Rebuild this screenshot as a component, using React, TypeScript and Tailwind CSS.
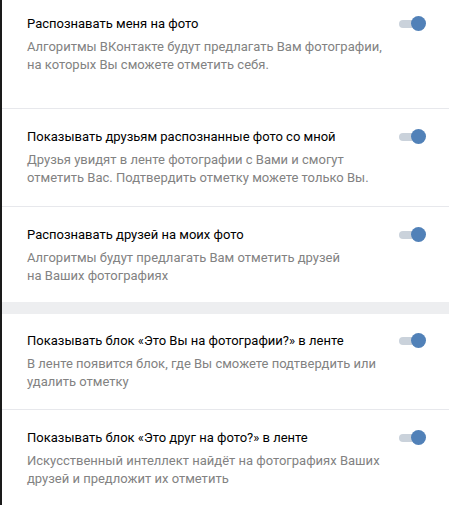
import React from "react";

type Item = { title: string; lines: string[] };

const Toggle = () => (
  <div className="relative w-[30px] h-[16px] shrink-0 mt-[1px]">
    <div className="absolute left-[2px] top-[4px] w-[24px] h-[8px] rounded-full bg-[#cad2db]" />
    <div className="absolute right-[1px] top-0 w-[15px] h-[15px] rounded-full bg-[#5181b8]" />
  </div>
);

const Row = ({ item, pt, pb }: { item: Item; pt: string; pb: string }) => (
  <div className={`flex justify-between pl-[25px] pr-[22px] ${pt} ${pb}`}>
    <div>
      <div className="text-[13px] leading-[18px] text-black">{item.title}</div>
      <div className="mt-[5px] text-[13px] leading-[18px] text-[#828282]">
        {item.lines.map((l, i) => (
          <div key={i}>{l}</div>
        ))}
      </div>
    </div>
    <Toggle />
  </div>
);

export default function App() {
  const g1: Item[] = [
    {
      title: "Распознавать меня на фото",
      lines: [
        "Алгоритмы ВКонтакте будут предлагать Вам фотографии,",
        "на которых Вы сможете отметить себя.",
      ],
    },
    {
      title: "Показывать друзьям распознанные фото со мной",
      lines: [
        "Друзья увидят в ленте фотографии с Вами и смогут",
        "отметить Вас. Подтвердить отметку можете только Вы.",
      ],
    },
    {
      title: "Распознавать друзей на моих фото",
      lines: [
        "Алгоритмы будут предлагать Вам отметить друзей",
        "на Ваших фотографиях",
      ],
    },
  ];
  const g2: Item[] = [
    {
      title: "Показывать блок «Это Вы на фотографии?» в ленте",
      lines: [
        "В ленте появится блок, где Вы сможете подтвердить или",
        "удалить отметку",
      ],
    },
    {
      title: "Показывать блок «Это друг на фото?» в ленте",
      lines: [
        "Искусственный интеллект найдёт на фотографиях Ваших",
        "друзей и предложит их отметить",
      ],
    },
  ];
  return (
    <div
      className="w-[449px] h-[505px] overflow-hidden bg-white border-l-[2px] border-[#1a1a1a]"
      style={{ fontFamily: "Roboto, 'Open Sans', Arial, sans-serif" }}
    >
      <div>
        <Row item={g1[0]} pt="pt-[15px]" pb="pb-[34px]" />
        <div className="h-px bg-[#e7e8ec]" />
        <Row item={g1[1]} pt="pt-[19px]" pb="pb-[19px]" />
        <div className="h-px bg-[#e7e8ec]" />
        <Row item={g1[2]} pt="pt-[19px]" pb="pb-[17px]" />
      </div>
      <div className="h-[12px] bg-[#edeef0]" />
      <div>
        <Row item={g2[0]} pt="pt-[18px]" pb="pb-[18px]" />
        <div className="h-px bg-[#e7e8ec]" />
        <Row item={g2[1]} pt="pt-[19px]" pb="pb-[19px]" />
      </div>
    </div>
  );
}
